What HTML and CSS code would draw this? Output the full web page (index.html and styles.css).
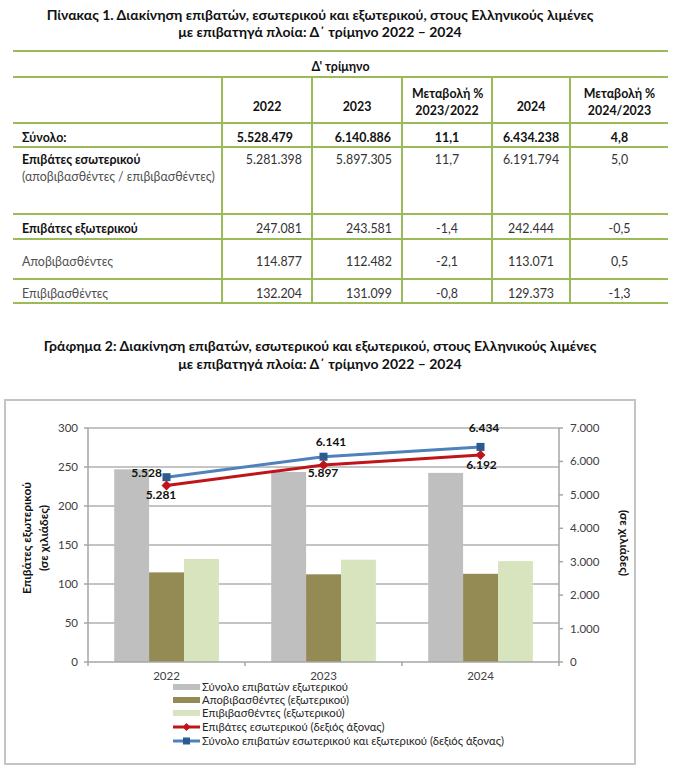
FILE: index.html
```html
<!DOCTYPE html>
<html lang="el">
<head>
<meta charset="utf-8">
<title>Διακίνηση επιβατών</title>
<link rel="stylesheet" href="styles.css">
</head>
<body>
<main class="page">
  <h1 class="caption caption-table">Πίνακας 1. Διακίνηση επιβατών, εσωτερικού και εξωτερικού, στους Ελληνικούς λιμένες<br>με επιβατηγά πλοία: Δ΄ τρίμηνο 2022 – 2024</h1>

  <table class="stats">
    <colgroup>
      <col class="c-label"><col class="c-num"><col class="c-num"><col class="c-num"><col class="c-num5"><col class="c-num6">
    </colgroup>
    <thead>
      <tr class="r-period"><th colspan="6">Δ' τρίμηνο</th></tr>
      <tr class="r-head">
        <th></th>
        <th class="yr">2022</th>
        <th class="yr">2023</th>
        <th class="chg">Μεταβολή %<br>2023/2022</th>
        <th class="yr">2024</th>
        <th class="chg">Μεταβολή %<br>2024/2023</th>
      </tr>
    </thead>
    <tbody>
      <tr class="r-total">
        <td class="lbl">Σύνολο:</td>
        <td class="ctr">5.528.479</td>
        <td class="rt">6.140.886</td>
        <td class="ctr">11,1</td>
        <td class="ctr">6.434.238</td>
        <td class="c6">4,8</td>
      </tr>
      <tr class="r-dom">
        <td class="lbl"><b>Επιβάτες εσωτερικού</b><br><span class="sub">(αποβιβασθέντες / επιβιβασθέντες)</span></td>
        <td class="rt">5.281.398</td>
        <td class="rt">5.897.305</td>
        <td class="ctr">11,7</td>
        <td class="ctr">6.191.794</td>
        <td class="c6">5,0</td>
      </tr>
      <tr class="r-int">
        <td class="lbl"><b>Επιβάτες εξωτερικού</b></td>
        <td class="rt">247.081</td>
        <td class="rt">243.581</td>
        <td class="ctr">-1,4</td>
        <td class="ctr">242.444</td>
        <td class="c6">-0,5</td>
      </tr>
      <tr class="r-arr">
        <td class="lbl sub">Αποβιβασθέντες</td>
        <td class="rt">114.877</td>
        <td class="rt">112.482</td>
        <td class="ctr">-2,1</td>
        <td class="ctr">113.071</td>
        <td class="c6">0,5</td>
      </tr>
      <tr class="r-dep">
        <td class="lbl sub">Επιβιβασθέντες</td>
        <td class="rt">132.204</td>
        <td class="rt">131.099</td>
        <td class="ctr">-0,8</td>
        <td class="ctr">129.373</td>
        <td class="c6">-1,3</td>
      </tr>
    </tbody>
  </table>

  <h2 class="caption caption-chart">Γράφημα 2: Διακίνηση επιβατών, εσωτερικού και εξωτερικού, στους Ελληνικούς λιμένες<br>με επιβατηγά πλοία: Δ΄ τρίμηνο 2022 – 2024</h2>

  <figure class="chart">
    <svg class="chart-svg" width="632" height="366" viewBox="0 0 632 366" xmlns="http://www.w3.org/2000/svg">
      <rect class="frame" x="1" y="1" width="630" height="364"/>

      <!-- gridlines -->
      <g class="grid">
        <line x1="84" y1="29" x2="555" y2="29"/>
        <line x1="84" y1="68" x2="555" y2="68"/>
        <line x1="84" y1="107" x2="555" y2="107"/>
        <line x1="84" y1="146" x2="555" y2="146"/>
        <line x1="84" y1="185" x2="555" y2="185"/>
        <line x1="84" y1="224" x2="555" y2="224"/>
      </g>

      <!-- bars -->
      <g class="bar-total">
        <rect x="110.2" y="70.3" width="34.9" height="192.7"/>
        <rect x="267.2" y="73" width="34.9" height="190"/>
        <rect x="424.2" y="73.9" width="34.9" height="189.1"/>
      </g>
      <g class="bar-arr">
        <rect x="145.1" y="173.4" width="34.9" height="89.6"/>
        <rect x="302.1" y="175.3" width="34.9" height="87.7"/>
        <rect x="459.1" y="174.8" width="34.9" height="88.2"/>
      </g>
      <g class="bar-dep">
        <rect x="180" y="159.9" width="34.9" height="103.1"/>
        <rect x="337" y="160.7" width="34.9" height="102.3"/>
        <rect x="494" y="162.1" width="34.9" height="100.9"/>
      </g>

      <!-- axes -->
      <g class="axis">
        <line x1="84" y1="263" x2="555" y2="263"/>
        <line x1="84" y1="29" x2="84" y2="263"/>
        <line x1="555" y1="29" x2="555" y2="263"/>
        <line x1="80" y1="29" x2="84" y2="29"/>
        <line x1="80" y1="68" x2="84" y2="68"/>
        <line x1="80" y1="107" x2="84" y2="107"/>
        <line x1="80" y1="146" x2="84" y2="146"/>
        <line x1="80" y1="185" x2="84" y2="185"/>
        <line x1="80" y1="224" x2="84" y2="224"/>
        <line x1="80" y1="263" x2="84" y2="263"/>
        <line x1="555" y1="29" x2="559" y2="29"/>
        <line x1="555" y1="62.4" x2="559" y2="62.4"/>
        <line x1="555" y1="95.9" x2="559" y2="95.9"/>
        <line x1="555" y1="129.3" x2="559" y2="129.3"/>
        <line x1="555" y1="162.7" x2="559" y2="162.7"/>
        <line x1="555" y1="196.1" x2="559" y2="196.1"/>
        <line x1="555" y1="229.6" x2="559" y2="229.6"/>
        <line x1="555" y1="263" x2="559" y2="263"/>
        <line x1="84" y1="263" x2="84" y2="267"/>
        <line x1="241" y1="263" x2="241" y2="267"/>
        <line x1="398" y1="263" x2="398" y2="267"/>
        <line x1="555" y1="263" x2="555" y2="267"/>
      </g>

      <!-- left axis labels -->
      <g class="tick tick-left">
        <text x="74" y="33">300</text>
        <text x="74" y="72">250</text>
        <text x="74" y="111">200</text>
        <text x="74" y="150">150</text>
        <text x="74" y="189">100</text>
        <text x="74" y="228">50</text>
        <text x="74" y="267">0</text>
      </g>
      <!-- right axis labels -->
      <g class="tick tick-right">
        <text x="566" y="33">7.000</text>
        <text x="566" y="66.4">6.000</text>
        <text x="566" y="99.9">5.000</text>
        <text x="566" y="133.3">4.000</text>
        <text x="566" y="166.7">3.000</text>
        <text x="566" y="200.1">2.000</text>
        <text x="566" y="233.6">1.000</text>
        <text x="566" y="267">0</text>
      </g>
      <!-- category labels -->
      <g class="tick tick-cat">
        <text x="162.5" y="281">2022</text>
        <text x="319.5" y="281">2023</text>
        <text x="476.5" y="281">2024</text>
      </g>

      <!-- axis titles -->
      <g class="axis-title">
        <text transform="translate(27 139) rotate(-90)">Επιβάτες εξωτερικού</text>
        <text transform="translate(44 139) rotate(-90)">(σε χιλιάδες)</text>
        <text transform="translate(616 144) rotate(90)">(σε χιλιάδες)</text>
      </g>

      <!-- lines -->
      <polyline class="line-total" points="162.5,78.2 319.5,57.7 476.5,47.9"/>
      <polyline class="line-dom" points="162.5,86.45 319.5,65.9 476.5,56"/>
      <g class="mark-total">
        <rect x="158.5" y="74.2" width="8" height="8"/>
        <rect x="315.5" y="53.7" width="8" height="8"/>
        <rect x="472.5" y="43.9" width="8" height="8"/>
      </g>
      <g class="mark-dom">
        <polygon points="162.5,81.45 167.5,86.45 162.5,91.45 157.5,86.45"/>
        <polygon points="319.5,60.9 324.5,65.9 319.5,70.9 314.5,65.9"/>
        <polygon points="476.5,51 481.5,56 476.5,61 471.5,56"/>
      </g>

      <!-- data labels -->
      <g class="dlabel">
        <text class="end" x="158" y="78">5.528</text>
        <text x="157" y="100">5.281</text>
        <text x="327" y="47">6.141</text>
        <text x="319" y="78">5.897</text>
        <text x="480" y="33">6.434</text>
        <text x="477.5" y="70">6.192</text>
      </g>

      <!-- legend -->
      <g class="legend">
        <rect class="sw-total" x="169" y="285" width="27" height="6"/>
        <text x="198" y="292">Σύνολο επιβατών εξωτερικού</text>
        <rect class="sw-arr" x="169" y="298" width="27" height="6"/>
        <text x="198" y="305">Αποβιβασθέντες (εξωτερικού)</text>
        <rect class="sw-dep" x="169" y="311" width="27" height="6"/>
        <text x="198" y="318">Επιβιβασθέντες (εξωτερικού)</text>
        <line class="line-dom" x1="169" y1="328" x2="196" y2="328"/>
        <polygon class="mark-dom-one" points="182.5,324 186.5,328 182.5,332 178.5,328"/>
        <text x="198" y="332">Επιβάτες εσωτερικού (δεξιός άξονας)</text>
        <line class="line-total" x1="169" y1="342" x2="196" y2="342"/>
        <rect class="mark-total-one" x="179" y="338.5" width="7" height="7"/>
        <text x="198" y="346">Σύνολο επιβατών εσωτερικού και εξωτερικού (δεξιός άξονας)</text>
      </g>
    </svg>
  </figure>
</main>
</body>
</html>
```

FILE: styles.css
```css
* { box-sizing: border-box; }

html, body {
  margin: 0;
  padding: 0;
  background: #ffffff;
}

body {
  font-family: Lato, "Noto Sans", "DejaVu Sans", sans-serif;
  color: #1a1a1a;
}

.page {
  width: 686px;
  height: 782px;
  overflow: hidden;
  padding-top: 6px;
}

.caption {
  width: 640px;
  margin: 0;
  text-align: center;
  font-weight: 700;
  font-size: 14px;
  line-height: 17px;
  color: #111;
}

.caption-chart {
  margin-top: 33px;
  line-height: 18px;
}

/* ---------- table ---------- */
.stats {
  margin: 10px 0 0 13px;
  width: 655px;
  table-layout: fixed;
  border-collapse: collapse;
  font-size: 12.4px;
  line-height: 17px;
  color: #333;
}

.c-label { width: 209px; }
.c-num { width: 90px; }
.c-num5 { width: 78px; }
.c-num6 { width: 98px; }

.stats th,
.stats td {
  border-top: 2px solid #9bbb59;
  border-bottom: 2px solid #9bbb59;
  border-left: 2px solid #9bbb59;
  padding: 4px 9px 0 9px;
  vertical-align: middle;
  white-space: nowrap;
}

.stats tr > :first-child { border-left: none; }

.stats th {
  font-weight: 700;
  color: #111;
  text-align: center;
}

.r-period { height: 26px; }
.r-period th {
  vertical-align: bottom;
  padding: 0 0 1px 0;
}

.r-head { height: 46px; }
.r-head th { vertical-align: bottom; }
.r-head .yr { padding-bottom: 7px; }
.r-head .chg { padding-bottom: 3px; }

.r-total { height: 24px; }
.r-total td { font-weight: 700; color: #111; }

.r-dom { height: 67px; }
.r-dom td {
  vertical-align: top;
  padding-top: 3px;
}

.r-int { height: 25px; }
.r-arr { height: 40px; }
.r-dep { height: 24px; }

.lbl b { color: #111; }
.sub { color: #505050; }

.rt { text-align: right; }
.ctr { text-align: center; }
.c6 {
  text-align: center;
  padding-left: 12px;
  padding-right: 2px;
}
.r-total td.rt { padding-right: 10px; }
.r-total td:nth-child(2) { padding-right: 18px; text-align: right; }

/* ---------- chart ---------- */
.chart {
  margin: 26px 0 0 4px;
  width: 632px;
  height: 366px;
}

.chart-svg { display: block; }

.frame {
  fill: #ffffff;
  stroke: #c4c4c4;
  stroke-width: 2;
}

.grid line {
  stroke: #b0b0b0;
  stroke-width: 1.5;
}

.axis line {
  stroke: #a6a6a6;
  stroke-width: 1.5;
}

.bar-total rect, .sw-total { fill: #bfbfbf; }
.bar-arr rect, .sw-arr { fill: #948a54; }
.bar-dep rect, .sw-dep { fill: #d7e4bd; }

.line-total {
  fill: none;
  stroke: #4f81bd;
  stroke-width: 3;
}
.line-dom {
  fill: none;
  stroke: #c0141b;
  stroke-width: 3;
}
.mark-total rect, .mark-total-one { fill: #2a5a8e; }
.mark-dom polygon, .mark-dom-one { fill: #c0141b; }

.tick text {
  font-family: Lato, "Noto Sans", sans-serif;
  font-size: 11.5px;
  fill: #404040;
}
.tick-left text { text-anchor: end; }
.tick-right text { text-anchor: start; }
.tick-cat text { text-anchor: middle; }

.axis-title text {
  font-family: Lato, "Noto Sans", sans-serif;
  font-size: 12px;
  font-weight: 700;
  fill: #111;
  text-anchor: middle;
}

.dlabel text {
  font-family: Lato, "Noto Sans", sans-serif;
  font-size: 12px;
  font-weight: 700;
  fill: #111;
  text-anchor: middle;
}
.dlabel text.end { text-anchor: end; }

.legend text {
  font-family: Lato, "Noto Sans", sans-serif;
  font-size: 11.3px;
  fill: #262626;
}
```
